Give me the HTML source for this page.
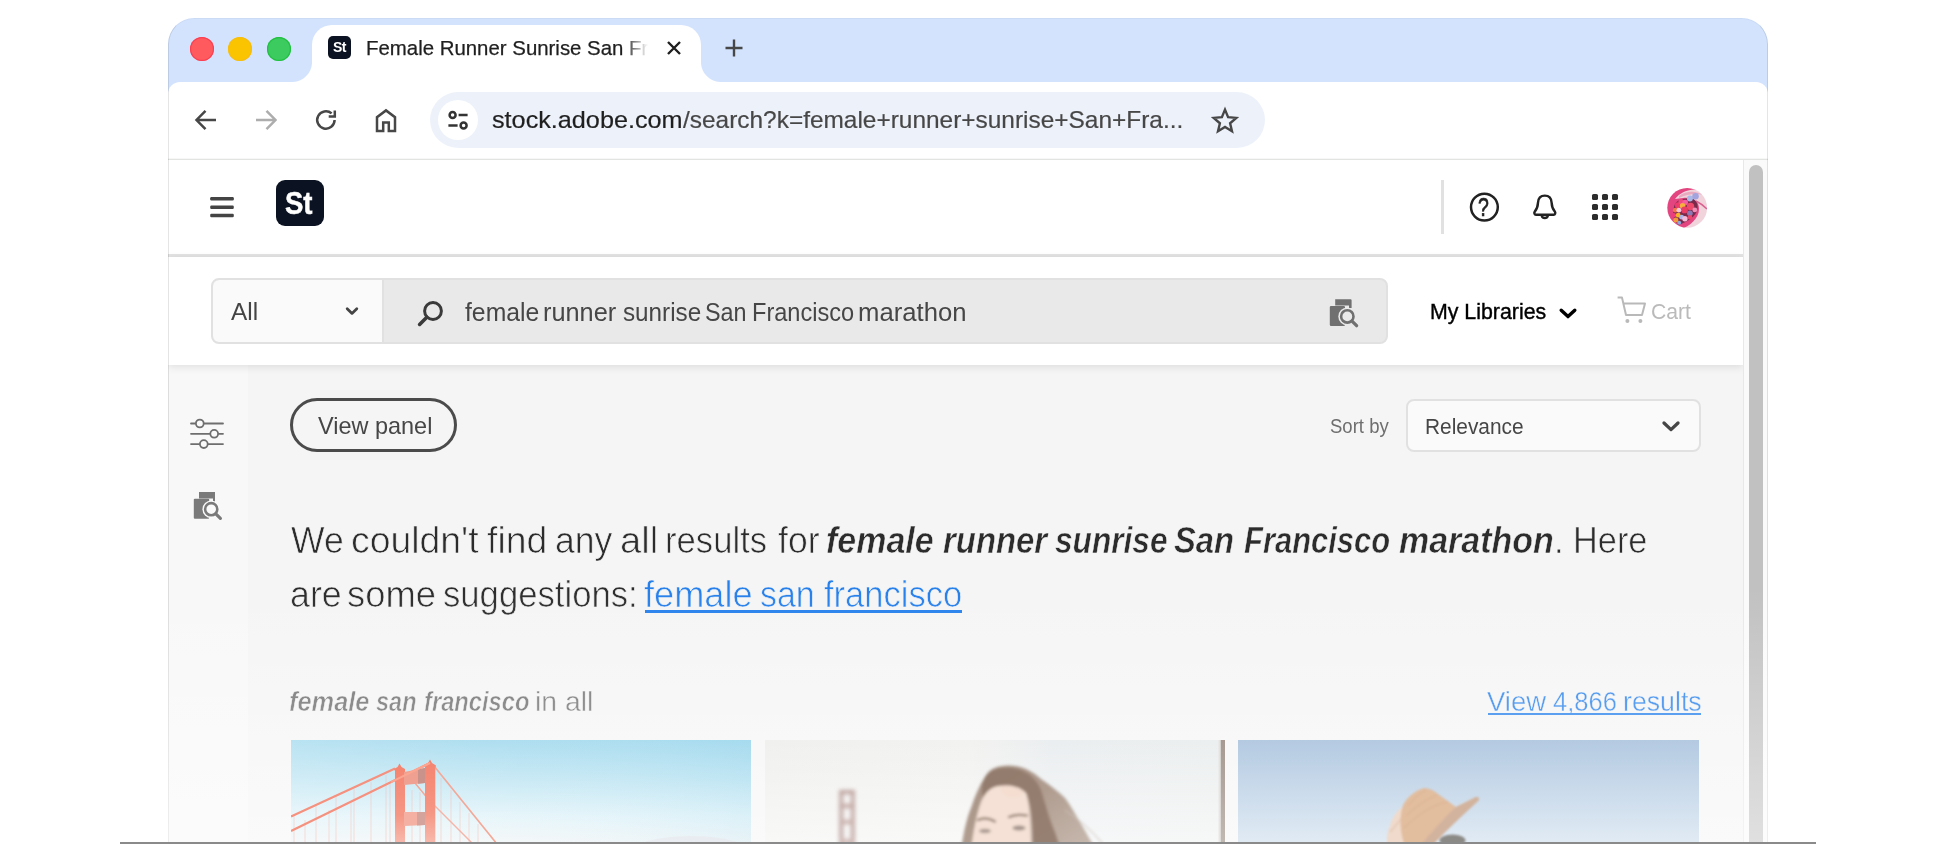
<!DOCTYPE html>
<html lang="en">
<head>
<meta charset="utf-8">
<title>Female Runner Sunrise San Francisco Marathon</title>
<style>
*{box-sizing:border-box;margin:0;padding:0}
html,body{width:1936px;height:844px;overflow:hidden;background:#fff}
body{font-family:"Liberation Sans",sans-serif;position:relative;color:#2c2c2c}
.abs{position:absolute}
#win{position:absolute;left:168px;top:18px;width:1600px;height:900px;border-radius:26px 26px 0 0;background:#fff;overflow:hidden}
#winb{position:absolute;left:0;top:0;width:1600px;height:900px;border-radius:26px 26px 0 0;border:1px solid rgba(0,0,0,.10);border-top-color:rgba(0,0,0,.03);pointer-events:none;z-index:39}
#tabstrip{position:absolute;left:0;top:0;width:1600px;height:90px;background:#d3e3fd}
#tab{position:absolute;left:144px;top:7px;width:389px;height:57px;background:#fff;border-radius:20px 20px 0 0}
#tab:before,#tab:after{content:"";position:absolute;bottom:0;width:20px;height:20px}
#tab:before{left:-20px;background:radial-gradient(circle at 0 0,rgba(255,255,255,0) 19.5px,#fff 20.5px)}
#tab:after{right:-20px;background:radial-gradient(circle at 100% 0,rgba(255,255,255,0) 19.5px,#fff 20.5px)}
.tl{position:absolute;top:19px;width:24px;height:24px;border-radius:50%}
#toolbar{position:absolute;left:0;top:64px;width:1600px;height:77px;background:#fff;border-radius:12px 12px 0 0}
#tbline{position:absolute;left:0;top:140px;width:1600px;height:3px;background:linear-gradient(#f7f7f7 0,#f7f7f7 33%,#e2e4e1 33%,#e2e4e1 67%,#f5f6f5 67%)}
#omni{position:absolute;left:262px;top:74px;width:835px;height:56px;border-radius:28px;background:#edf2fa}
#omni .chip{position:absolute;left:8px;top:8px;width:40px;height:40px;border-radius:50%;background:#fff}
#t_url b{font-weight:normal;color:#1f1f1f}
#tabclip{position:absolute;left:54px;top:0;width:284px;height:57px;overflow:hidden;-webkit-mask-image:linear-gradient(90deg,#000 0,#000 258px,transparent 282px);mask-image:linear-gradient(90deg,#000 0,#000 258px,transparent 282px)}
#page{position:absolute;left:0;top:142px;width:1575px;height:760px;background:#f5f5f5;overflow:hidden}
#sb{position:absolute;left:1575px;top:142px;width:25px;height:760px;background:#fafafa;border-left:1px solid #e8e8e8}
#sb i{position:absolute;left:5px;top:5px;width:13.5px;height:760px;border-radius:7px;background:#c1c1c1}
#hdr{position:absolute;left:0;top:0;width:1575px;height:94px;background:#fff}
#hdrline{position:absolute;left:0;top:94px;width:1575px;height:3px;background:#e3e3e3}
#srow{position:absolute;left:0;top:97px;width:1575px;height:108px;background:#fff;box-shadow:0 2px 8px rgba(0,0,0,.10)}
#side{position:absolute;left:0;top:205px;width:80px;height:600px;background:#f8f8f8}
.ac{font-family:"Liberation Sans",sans-serif}

#stlogo{left:108px;top:20px;width:48px;height:46px;border-radius:9px;background:#0b1221}
#avatar{left:1499px;top:27px}
#sbox{left:43px;top:21px;width:1177px;height:66px;border-radius:8px;background:#e9e9e9;border:2px solid #e1e1e1;overflow:hidden}
#sall{left:-2px;top:-2px;width:173px;height:66px;background:#fafafa;border:2px solid #e1e1e1;border-radius:8px 0 0 8px;font-size:22px;line-height:62px;color:#2c2c2c}
.t{position:absolute;display:block;white-space:nowrap;transform-origin:0 0;line-height:1.2}
#vp{left:122px;top:238px;width:167px;height:54px;border:3px solid #4b4b4b;border-radius:27px}
#sortsel{left:1238px;top:239px;width:295px;height:53px;border:2px solid #e1e1e1;border-radius:8px;background:#fafafa}
.hl{font-size:37px;color:#2c2c2c;-webkit-text-stroke:.7px #f5f5f5}
.bi{font-weight:bold;font-style:italic}
.hl.bi{-webkit-text-stroke:.55px #f5f5f5}
.lk{color:#2680eb}
.hl.lk{-webkit-text-stroke:.7px #f5f5f5}
.sb{font-size:28px;color:#6e6e6e;-webkit-text-stroke:.4px #f5f5f5}
.sb.bi{color:#6a6a6a;-webkit-text-stroke:.6px #f5f5f5}
.sb.lk{color:#2680eb}
#fade{display:none}
#gfade{position:absolute;left:0;top:570px;width:1600px;height:330px;background:linear-gradient(rgba(255,255,255,0) 0,rgba(255,255,255,.5) 256px,rgba(255,255,255,.5) 100%);pointer-events:none;z-index:40}
#img1,#img2,#img3{z-index:45}
</style>
</head>
<body>
<div id="win">
  <div id="tabstrip">
    <div class="tl" style="left:22px;background:#ff5b5f;box-shadow:inset 0 0 0 1.2px #fb3f52"></div>
    <div class="tl" style="left:60px;background:#fac400;box-shadow:inset 0 0 0 1.2px #f7bd10"></div>
    <div class="tl" style="left:99px;background:#3bcb5e;box-shadow:inset 0 0 0 1.2px #22c040"></div>
    <div id="tab">
      <div class="abs" style="left:16px;top:11px;width:23px;height:23px;border-radius:5px;background:#0b1221;color:#fff;font-weight:bold;font-size:14px;line-height:23px;transform:scaleX(1.0001);text-align:center;letter-spacing:-0.5px">St</div>
      <div id="tabclip"><span class="t" id="t_tab" style="-webkit-text-stroke:.25px #1f1f1f;left:0.00px;top:11.11px;font-size:20.5px;color:#1f1f1f;transform:scaleX(0.9952)">Female Runner Sunrise San Francisco Marathon</span></div>
      <svg class="abs" style="left:353px;top:14px" width="18" height="18" viewBox="0 0 18 18"><path d="M3 3 L15 15 M15 3 L3 15" stroke="#1f1f1f" stroke-width="2.4" fill="none"/></svg>
    </div>
    <svg class="abs" style="left:556px;top:20px" width="20" height="20" viewBox="0 0 20 20"><path d="M10 1.5 V18.5 M1.5 10 H18.5" stroke="#474747" stroke-width="2.4" fill="none"/></svg>
  </div>
  <div id="toolbar"></div>
  <svg class="abs" style="left:24px;top:88px" width="28" height="28" viewBox="0 0 28 28"><path d="M24 14 H5 M13.5 4.8 L4.5 14 L13.5 23.2" stroke="#474747" stroke-width="2.5" fill="none"/></svg>
  <svg class="abs" style="left:84px;top:88px" width="28" height="28" viewBox="0 0 28 28"><path d="M4 14 H23 M14.5 4.8 L23.5 14 L14.5 23.2" stroke="#adadad" stroke-width="2.5" fill="none"/></svg>
  <svg class="abs" style="left:144px;top:88px" width="28" height="28" viewBox="0 0 28 28"><path d="M22.6 14 A8.7 8.7 0 1 1 19.6 7.4" stroke="#474747" stroke-width="2.5" fill="none"/><path d="M22.8 4.5 V10.6 H16.7" stroke="#474747" stroke-width="2.5" fill="none"/></svg>
  <svg class="abs" style="left:204px;top:88px" width="28" height="28" viewBox="0 0 28 28"><path d="M5 25 V11.2 L14 4.4 L23 11.2 V25 H16.8 V16.4 H11.2 V25 Z" stroke="#474747" stroke-width="2.5" fill="none" stroke-linejoin="miter"/></svg>
  <div id="omni"><div class="chip"></div>
    <svg class="abs" style="left:16px;top:16px" width="24" height="24" viewBox="0 0 24 24"><circle cx="6.6" cy="7" r="3" stroke="#333" stroke-width="2.5" fill="none"/><path d="M12.6 7 H21.6" stroke="#333" stroke-width="2.5"/><circle cx="17.6" cy="17.4" r="3" stroke="#333" stroke-width="2.5" fill="none"/><path d="M2.4 17.4 H11.6" stroke="#333" stroke-width="2.5"/></svg>
    <span class="t" id="t_url1" style="left:61.60px;top:14.21px;font-size:24px;color:#1f1f1f;-webkit-text-stroke:.2px #1f1f1f;transform:scaleX(1.0503)">stock.adobe.com</span><span class="t" id="t_url2" style="left:252.60px;top:14.21px;font-size:24px;color:#474747;-webkit-text-stroke:.2px #474747;transform:scaleX(1.0176)">/search?k=female+runner+sunrise+San+Fra...</span>
    <svg class="abs" style="left:780px;top:14px" width="30" height="30" viewBox="0 0 30 30"><path d="M15 3.6 L18.1 11.2 L26.3 11.9 L20.1 17.3 L22 25.3 L15 21 L8 25.3 L9.9 17.3 L3.7 11.9 L11.9 11.2 Z" stroke="#474747" stroke-width="2.4" fill="none" stroke-linejoin="miter"/></svg>
  </div>
  <div id="tbline"></div>
  <div id="page">
    <div id="side"></div>
    <!-- results content -->
    <div id="content">
      <div class="abs" id="vp"></div><span class="t" id="t_vp" style="left:150.00px;top:252.21px;font-size:24px;color:#464646;transform:scaleX(0.9779)">View panel</span>
      <span class="t" id="t_sort" style="left:1161.80px;top:254.41px;font-size:20px;color:#6e6e6e;transform:scaleX(0.9265)">Sort by</span>
      <span class="t" id="t_rel" style="left:1257.00px;top:253.91px;font-size:22px;color:#464646;z-index:2;transform:scaleX(0.9486)">Relevance</span><div class="abs" id="sortsel">
        <svg class="abs" style="left:253px;top:19px" width="20" height="14" viewBox="0 0 20 14"><path d="M3 3 L10 9.6 L17 3" stroke="#464646" stroke-width="3.3" fill="none" stroke-linecap="round" stroke-linejoin="round"/></svg>
      </div>
      <span class="t hl" id="t_hA_0" style="left:122.50px;top:359.25px;transform:scaleX(0.9610)">We</span>
      <span class="t hl" id="t_hA_1" style="left:182.50px;top:359.25px;transform:scaleX(1.0095)">couldn't</span>
      <span class="t hl" id="t_hA_2" style="left:318.50px;top:359.25px;transform:scaleX(1.0100)">find</span>
      <span class="t hl" id="t_hA_3" style="left:386.50px;top:359.25px;transform:scaleX(0.9610)">any</span>
      <span class="t hl" id="t_hA_4" style="left:451.50px;top:359.25px;transform:scaleX(1.0309)">all</span>
      <span class="t hl" id="t_hA_5" style="left:496.50px;top:359.25px;transform:scaleX(0.9370)">results</span>
      <span class="t hl" id="t_hA_6" style="left:609.50px;top:359.25px;transform:scaleX(0.9610)">for</span>
      <span class="t hl bi" id="t_hB_0" style="left:658.00px;top:359.25px;transform:scaleX(0.9178)">female</span>
      <span class="t hl bi" id="t_hB_1" style="left:775.00px;top:359.25px;transform:scaleX(0.8890)">runner</span>
      <span class="t hl bi" id="t_hB_2" style="left:887.00px;top:359.25px;transform:scaleX(0.8550)">sunrise</span>
      <span class="t hl bi" id="t_hB_3" style="left:1006.00px;top:359.25px;transform:scaleX(0.8861)">San</span>
      <span class="t hl bi" id="t_hB_4" style="left:1076.00px;top:359.25px;transform:scaleX(0.8362)">Francisco</span>
      <span class="t hl bi" id="t_hB_5" style="left:1231.00px;top:359.25px;transform:scaleX(0.9177)">marathon</span>
      <span class="t hl" id="t_hC" style="left:1386.00px;top:359.25px;transform:scaleX(0.9272)">. Here</span>
      <span class="t hl" id="t_hD_0" style="left:121.50px;top:413.00px;transform:scaleX(0.9665)">are</span>
      <span class="t hl" id="t_hD_1" style="left:178.50px;top:413.00px;transform:scaleX(0.9821)">some</span>
      <span class="t hl" id="t_hD_2" style="left:274.50px;top:413.00px;transform:scaleX(0.9372)">suggestions:</span>
      <span class="t hl lk" id="t_hE_0" style="left:476.00px;top:413.00px;transform:scaleX(0.9788)">female</span>
      <span class="t hl lk" id="t_hE_1" style="left:591.80px;top:413.00px;transform:scaleX(0.9178)">san</span>
      <span class="t hl lk" id="t_hE_2" style="left:655.80px;top:413.00px;transform:scaleX(0.9339)">francisco</span>
      <div class="abs" id="u_hE" style="left:476.5px;top:450px;width:317px;height:2.6px;background:#2680eb"></div>
      <span class="t sb bi" id="t_sA_0" style="left:121.00px;top:525.30px;transform:scaleX(0.9070)">female</span>
      <span class="t sb bi" id="t_sA_1" style="left:208.00px;top:525.30px;transform:scaleX(0.8391)">san</span>
      <span class="t sb bi" id="t_sA_2" style="left:255.60px;top:525.30px;transform:scaleX(0.8475)">francisco</span>
      <span class="t sb" id="t_sB" style="left:367.00px;top:525.30px;transform:scaleX(1.0118)">in all</span>
      <span class="t sb lk" id="t_vr_0" style="left:1318.80px;top:525.30px;transform:scaleX(0.9814)">View</span>
      <span class="t sb lk" id="t_vr_1" style="left:1385.00px;top:525.30px;transform:scaleX(0.9124)">4,866</span>
      <span class="t sb lk" id="t_vr_2" style="left:1454.80px;top:525.30px;transform:scaleX(0.9540)">results</span>
      <div class="abs" id="u_vr" style="left:1320px;top:553px;width:213px;height:2.4px;background:#2680eb"></div>
      
    </div>
    <div id="fade"></div>
    <svg class="abs" style="left:20px;top:256px" width="38" height="36" viewBox="0 0 38 36">
      <g stroke="#6e6e6e" stroke-width="1.8" fill="none" stroke-linecap="round">
        <path d="M3 7.5 H7.2 M16.4 7.5 H35"/><circle cx="11.8" cy="7.5" r="3.9" fill="#fafafa"/>
        <path d="M3 17.8 H21.6 M30.8 17.8 H35"/><circle cx="26.2" cy="17.8" r="3.9" fill="#fafafa"/>
        <path d="M3 28.1 H11.2 M20.4 28.1 H35"/><circle cx="15.8" cy="28.1" r="3.9" fill="#fafafa"/>
      </g>
    </svg>
    <svg class="abs" style="left:24px;top:330px" width="32" height="32" viewBox="0 0 32 32">
      <path d="M7 2 H23 V12 H21 V8.5 H7 Z" fill="#7a7a7a"/>
      <rect x="1.8" y="8.8" width="15.4" height="20" rx="1" fill="#7a7a7a"/>
      <circle cx="19.2" cy="19.2" r="8.8" fill="#fafafa"/>
      <circle cx="19.2" cy="19.2" r="6.1" fill="#fafafa" stroke="#7a7a7a" stroke-width="2.6"/>
      <path d="M23.8 23.8 L28.4 28.4" stroke="#7a7a7a" stroke-width="3.2" stroke-linecap="round"/>
    </svg>
    <svg class="abs" id="img1" style="left:123px;top:580px" width="460" height="110" viewBox="0 0 460 110">
      <defs>
        <linearGradient id="g1" x1="0" y1="0" x2="0" y2="1"><stop offset="0" stop-color="#a9dcef"/><stop offset=".35" stop-color="#c6e8f4"/><stop offset=".7" stop-color="#e6f5fa"/><stop offset="1" stop-color="#f7f8f8"/></linearGradient>
        <linearGradient id="g1h" x1="0" y1="0" x2="1" y2="0"><stop offset="0" stop-color="#fff" stop-opacity=".18"/><stop offset=".5" stop-color="#fff" stop-opacity=".05"/><stop offset="1" stop-color="#8fd0ea" stop-opacity=".12"/></linearGradient>
        <linearGradient id="g1t" x1="0" y1="0" x2="0" y2="1"><stop offset="0" stop-color="#f4836f"/><stop offset=".6" stop-color="#f59785"/><stop offset="1" stop-color="#f8c2b7"/></linearGradient>
        <filter id="b1" x="-5%" y="-5%" width="110%" height="110%"><feGaussianBlur stdDeviation=".7"/></filter>
      </defs>
      <rect width="460" height="110" fill="url(#g1)"/>
      <rect width="460" height="110" fill="url(#g1h)"/>
      <g filter="url(#b1)">
        <g stroke="#f3b8ae" stroke-width=".9" opacity=".5" fill="none">
          <path d="M3 76 V110 M14 80 V110 M25 66 V110 M38 70 V110 M45 57 V110 M60 62 V110 M63 49 V110 M80 42 V110 M95 35 V110 M99 44 V110 M121 50 V110 M129 52 V110 M150 38 V110 M160 50 V110 M169 62 V110 M178 73 V110 M187 84 V110"/>
        </g>
        <path d="M0 76.5 L104 28.6" stroke="#f5917e" stroke-width="2.2" fill="none"/>
        <path d="M0 91 L139 23" stroke="#f5917e" stroke-width="2.2" fill="none"/>
        <path d="M143 26 L206 104" stroke="#f4a898" stroke-width="1.7" fill="none"/>
        <path d="M124 43 L138 60" stroke="#f4a898" stroke-width="1.5" fill="none"/>
        <path d="M142 64 L182 104" stroke="#f5b5a8" stroke-width="1.5" fill="none"/>
        <path d="M104 110 V31 L103 29 L106.5 27 L108.5 23.5 L110.5 27 L114 29 V110 Z" fill="url(#g1t)"/>
        <path d="M134 110 V27 L133 25 L137 23 L139 19.5 L141 23 L145 25.5 L144.3 28 V110 Z" fill="url(#g1t)"/>
        <path d="M113 32 L134 28 V43 L113 45 Z" fill="#f0a090"/>
        <path d="M127 29.5 L134 28 V43 L127 43.7 Z" fill="#c9928a"/>
        <path d="M113 72 H134 V85 L113 86 Z" fill="#f3b0a3"/>
        <path d="M126 72 H134 V85 L126 85.5 Z" fill="#d4a39c"/>
        <path d="M100 42.2 L139 23" stroke="#fba692" stroke-width="2" fill="none"/>
      </g>
      <ellipse cx="400" cy="112" rx="60" ry="16" fill="#e9e9ee" opacity=".6" filter="url(#b1)"/>
    </svg>
    <svg class="abs" id="img2" style="left:597px;top:580px" width="460" height="110" viewBox="0 0 460 110">
      <defs>
        <linearGradient id="g2" x1="0" y1="0" x2="1" y2="0"><stop offset="0" stop-color="#f0f0ee"/><stop offset=".45" stop-color="#f2f2f0"/><stop offset=".62" stop-color="#ebeef0"/><stop offset="1" stop-color="#ecefef"/></linearGradient>
        <linearGradient id="g2v" x1="0" y1="0" x2="0" y2="1"><stop offset="0" stop-color="#fff" stop-opacity="0"/><stop offset="1" stop-color="#fff" stop-opacity=".6"/></linearGradient>
        <linearGradient id="g2hair" x1="0" y1="0" x2="1" y2="1"><stop offset="0" stop-color="#a38e80"/><stop offset=".45" stop-color="#b09c8f"/><stop offset="1" stop-color="#c9bbb1"/></linearGradient>
        <linearGradient id="g2e" x1="0" y1="0" x2="0" y2="1"><stop offset="0" stop-color="#a69a92"/><stop offset="1" stop-color="#c3bbb5"/></linearGradient>
        <filter id="b2" x="-40%" y="-20%" width="180%" height="140%"><feGaussianBlur stdDeviation="2.2"/></filter>
        <filter id="b2b" x="-20%" y="-20%" width="140%" height="140%"><feGaussianBlur stdDeviation="1.5"/></filter>
      </defs>
      <rect width="460" height="110" fill="url(#g2)"/>
      <rect width="460" height="110" fill="url(#g2v)"/>
      <g filter="url(#b2)">
        <rect x="74" y="50" width="4.5" height="60" fill="#c8b2ae"/>
        <rect x="85.5" y="50" width="4.5" height="60" fill="#c8b2ae"/>
        <rect x="74" y="50" width="16" height="4" fill="#bfa5a1"/>
        <rect x="74" y="64" width="16" height="4" fill="#c4aaa6"/>
        <rect x="74" y="80" width="16" height="4" fill="#c9b0ac"/>
        <rect x="74" y="99" width="16" height="5" fill="#d0bab6"/>
      </g>
      <g filter="url(#b2b)">
        <path d="M196 110 C198 96 201 80 206 68 C210 56 214 46 220 37 C224 29 232 25.5 244 25.5 C258 25.5 268 32 276 39 C286 46 294 52 300 58 C306 66 310 74 316 84 C322 94 326 102 332 110 Z" fill="url(#g2hair)"/>
        <path d="M220 37 C226 28 240 26 252 29 C264 32 272 40 276 50 C280 62 284 78 290 92 L296 110 L268 110 C268 92 268 70 262 54 C254 46 244 44 232 46 C226 48 222 52 218 58 C216 50 217 43 220 37 Z" fill="#8f7868" opacity=".85"/>
        <path d="M206 110 C208 94 211 76 216 62 C220 52 226 47 234 46 C244 44.5 254 46 261 53 C265 66 266 84 266 110 Z" fill="#f5e1d5"/>
        <path d="M236 47 C244 46 252 48 258 52 C256 56 250 58 242 56 C238 54 236 50 236 47 Z" fill="#f6d9ca" opacity=".45"/>
        <path d="M213 80 C218 77.5 224 78 230 81.5" stroke="#8f776a" stroke-width="2.2" fill="none" stroke-linecap="round"/>
        <path d="M244 77 C250 74.5 256 74.5 262 75.5" stroke="#8f776a" stroke-width="2.2" fill="none" stroke-linecap="round"/>
        <ellipse cx="220" cy="91" rx="6" ry="2.2" fill="#aa9a92"/>
        <ellipse cx="254" cy="88" rx="6.5" ry="2.4" fill="#a3938b"/>
        <path d="M300 70 C312 78 326 90 338 104" stroke="#cfc3bb" stroke-width="1.2" fill="none" opacity=".7"/>
      </g>
      <rect x="455.6" y="0" width="4.4" height="110" fill="url(#g2e)"/>
      <rect x="453.6" y="0" width="2" height="110" fill="#ddd8d4" opacity=".55"/>
    </svg>
    <svg class="abs" id="img3" style="left:1070px;top:580px" width="461" height="110" viewBox="0 0 461 110">
      <defs>
        <linearGradient id="g3" x1="0" y1="0" x2="0" y2="1"><stop offset="0" stop-color="#b4cae1"/><stop offset=".5" stop-color="#ccdcec"/><stop offset="1" stop-color="#e4edf5"/></linearGradient>
        <filter id="b3" x="-10%" y="-10%" width="120%" height="120%"><feGaussianBlur stdDeviation=".8"/></filter>
      </defs>
      <rect width="461" height="110" fill="url(#g3)"/>
      <g filter="url(#b3)">
        <ellipse cx="214.5" cy="100.5" rx="13" ry="6" fill="#8c8a86"/>
        <path d="M150 110 C148 100 149 92 152 86 C154 78 158 72 164 67 L170 72 C168 82 168 96 170 110 Z" fill="#f0dacb"/>
        <path d="M152 92 C156 88 160 82 166 76" stroke="#e3c7b6" stroke-width="1.4" fill="none"/>
        <path d="M186 48 C190 48 196 50 200 54 L218 67 L238 57 C241 56.5 242 59 240 61 C226 74 208 90 194 106 L167 106 C162 92 161 78 165 65 C170 56 178 50 186 48 Z" fill="#e2bd9e"/>
        <path d="M218 67 L238 57 C241 56.5 242 59 240 61 C226 74 208 90 194 106 L182 106 C194 92 206 78 218 67 Z" fill="#d2b39e"/>
        <path d="M170 66 C176 58 182 53 188 50 M168 76 C178 66 190 58 200 55 M166 88 C180 74 196 64 210 62" stroke="#d8ae8c" stroke-width="1" fill="none" opacity=".6"/>
      </g>
    </svg>
    <div id="hdr">
      <svg class="abs" style="left:40px;top:34px" width="28" height="26" viewBox="0 0 28 26" fill="#444"><rect x="2.2" y="3" width="23.6" height="3.5" rx="1.2"/><rect x="2.2" y="11.5" width="23.6" height="3.5" rx="1.2"/><rect x="2.2" y="19.8" width="23.6" height="3.5" rx="1.2"/></svg>
      <div class="abs" id="stlogo"></div><span class="t" id="t_st" style="left:117.20px;top:24.91px;font-size:31px;font-weight:bold;color:#fff;-webkit-text-stroke:.5px #fff;transform:scaleX(0.8882)">St</span>
      <div class="abs" style="left:1273px;top:20px;width:3px;height:54px;background:#e1e1e1"></div>
      <span class="t" id="t_q" style="left:1310.40px;top:32.00px;font-size:25px;color:#222;-webkit-text-stroke:.7px #222;transform:scaleX(0.7781)">?</span><svg class="abs" style="left:1299px;top:30px" width="34" height="34" viewBox="0 0 34 34"><circle cx="17.4" cy="17.1" r="13.4" stroke="#222" stroke-width="2.5" fill="none"/></svg>
      <svg class="abs" style="left:1360px;top:30px" width="34" height="34" viewBox="0 0 34 34"><path d="M16.8 5.6 C12.2 5.6 10.2 8.8 10 12.6 C9.8 17 9 19 6.8 21.6 C5.8 22.8 6.4 24.7 8 24.7 H25.6 C27.2 24.7 27.8 22.8 26.8 21.6 C24.6 19 23.8 17 23.6 12.6 C23.4 8.8 21.4 5.6 16.8 5.6 Z" stroke="#222" stroke-width="2.4" fill="none" stroke-linejoin="round"/><path d="M13.7 25.6 A3.2 3.2 0 0 0 19.9 25.6" stroke="#222" stroke-width="2.3" fill="none"/></svg>
      <svg class="abs" style="left:1423px;top:33px" width="28" height="28" viewBox="0 0 28 28" fill="#2c2c2c"><rect x="1" y="1" width="6" height="6" rx="1.6"/><rect x="11" y="1" width="6" height="6" rx="1.6"/><rect x="21" y="1" width="6" height="6" rx="1.6"/><rect x="1" y="11" width="6" height="6" rx="1.6"/><rect x="11" y="11" width="6" height="6" rx="1.6"/><rect x="21" y="11" width="6" height="6" rx="1.6"/><rect x="1" y="21" width="6" height="6" rx="1.6"/><rect x="11" y="21" width="6" height="6" rx="1.6"/><rect x="21" y="21" width="6" height="6" rx="1.6"/></svg>
      <svg class="abs" id="avatar" width="41" height="41" viewBox="0 0 41 41">
        <defs><clipPath id="avc"><circle cx="20.2" cy="20.8" r="19.9"/></clipPath>
        <filter id="avb" x="-10%" y="-10%" width="120%" height="120%"><feGaussianBlur stdDeviation=".55"/></filter></defs>
        <g clip-path="url(#avc)"><g filter="url(#avb)">
          <rect x="-2" y="-2" width="45" height="45" fill="#e2457f"/>
          <path d="M8 12 C14 4 26 0 36 4 L44 14 V44 H10 C22 40 32 32 32 22 C32 14 26 10 16 11 Z" fill="#f1d3dc"/>
          <path d="M12 9 C20 3 30 4 36 8 C30 6 20 7 12 11 Z" fill="#e9a9bf"/>
          <path d="M29 14 C33 16 37 19 40 22" stroke="#d9628f" stroke-width="1.5" fill="none"/>
          <path d="M7 20 C8 13 16 10 26 12 C30 14 31 18 30.5 22 C29 30 20 35 10.5 38.5 C6 34 5.5 26 7 20 Z" fill="#7a2c4c"/>
          <path d="M1 24 C2 32 5 37 10 39.5 L11 37 C6 33 5 27 6 21 Z" fill="#e2457f"/>
          <circle cx="10.9" cy="18.2" r="3" fill="#ee3a6e"/><circle cx="14.2" cy="14.9" r="2.8" fill="#f04a7e"/><circle cx="18.2" cy="15.6" r="2.8" fill="#f45ca0"/><circle cx="8.3" cy="23.2" r="2.4" fill="#f4774a"/><circle cx="6.9" cy="28.2" r="2.3" fill="#f03c80"/><circle cx="15.6" cy="18.9" r="2.8" fill="#f6b03c"/><circle cx="23.5" cy="19.5" r="3.7" fill="#ee4a6a"/><circle cx="17.5" cy="22.9" r="3.4" fill="#ea3e64"/><circle cx="11.9" cy="23.2" r="2.4" fill="#f8c6dc"/><circle cx="27.8" cy="22.9" r="2.4" fill="#f090b8"/><circle cx="22.9" cy="26.2" r="2.8" fill="#8c7ab4"/><circle cx="11.2" cy="28.2" r="2.4" fill="#f6b428"/><circle cx="22.9" cy="30.2" r="2.3" fill="#e8486a"/><circle cx="14.6" cy="30.2" r="2.4" fill="#a9b6e8"/><circle cx="17.9" cy="31.8" r="2.7" fill="#f4bcd8"/><circle cx="8.9" cy="33.1" r="2.5" fill="#f49a3a"/><circle cx="12.2" cy="35.8" r="2" fill="#8ea6dc"/><circle cx="22.9" cy="11.6" r="3" fill="#a9b8e6"/><circle cx="28.5" cy="9.3" r="3.3" fill="#a3a4de"/>
        </g></g>
      </svg>
    </div>
    <div id="hdrline"></div>
    <div id="srow">
      <div class="abs" id="sbox">
        <div class="abs" id="sall"><span class="t" id="t_all" style="left:17.80px;top:18.71px;font-size:23px;color:#444;transform:scaleX(1.0599)">All</span>
          <svg class="abs" style="left:131px;top:26px" width="16" height="12" viewBox="0 0 16 12"><path d="M3.2 2.8 L8 7.4 L12.8 2.8" stroke="#444" stroke-width="2.8" fill="none" stroke-linecap="round" stroke-linejoin="round"/></svg>
        </div>
        <svg class="abs" style="left:202px;top:18.5px" width="30" height="30" viewBox="0 0 30 30"><circle cx="18" cy="12" r="8.4" stroke="#3a3a3a" stroke-width="3" fill="none"/><path d="M11.8 18.2 L4.6 25.4" stroke="#3a3a3a" stroke-width="3.6" stroke-linecap="round"/></svg>
        <svg class="abs" style="left:1114px;top:15.5px" width="34" height="34" viewBox="0 0 34 34">
          <path d="M8.2 3.2 H23.6 Q24.6 3.2 24.6 4.2 V12 H22 V9.6 H8.2 Z" fill="#707070"/>
          <rect x="2.8" y="9.9" width="15.2" height="20" rx="1.2" fill="#707070"/>
          <circle cx="20.3" cy="20.4" r="9" fill="#e9e9e9"/>
          <circle cx="20.3" cy="20.4" r="6.2" fill="#e9e9e9" stroke="#707070" stroke-width="2.6"/>
          <path d="M25 25.1 L29.6 29.7" stroke="#707070" stroke-width="3.3" stroke-linecap="round"/>
        </svg>
        <span class="t" id="t_sq_0" style="left:251.60px;top:17.00px;font-size:26px;color:#464646;transform:scaleX(0.9512)">female</span>
      <span class="t" id="t_sq_1" style="left:330.40px;top:17.00px;font-size:26px;color:#464646;transform:scaleX(0.9739)">runner</span>
      <span class="t" id="t_sq_2" style="left:409.80px;top:17.00px;font-size:26px;color:#464646;transform:scaleX(0.9324)">sunrise</span>
      <span class="t" id="t_sq_3" style="left:492.40px;top:17.00px;font-size:26px;color:#464646;transform:scaleX(0.8987)">San</span>
      <span class="t" id="t_sq_4" style="left:539.00px;top:17.00px;font-size:26px;color:#464646;transform:scaleX(0.9069)">Francisco</span>
      <span class="t" id="t_sq_5" style="left:645.40px;top:17.00px;font-size:26px;color:#464646;transform:scaleX(0.9876)">marathon</span>
      </div>
      <span class="t" id="t_ml" style="left:1262.40px;top:42.21px;font-size:22px;color:#000;-webkit-text-stroke:0.4px #000;transform:scaleX(0.9696)">My Libraries</span>
      <svg class="abs" style="left:1389.5px;top:50px" width="20" height="14" viewBox="0 0 20 14"><path d="M3.2 3.2 L10 9.6 L16.8 3.2" stroke="#000" stroke-width="3.4" fill="none" stroke-linecap="round" stroke-linejoin="round"/></svg>
      <svg class="abs" style="left:1448px;top:38px" width="32" height="32" viewBox="0 0 32 32"><path d="M1.6 2.6 H6 L10 20 H26 L29 8.4 H8" stroke="#b9b9b9" stroke-width="2" fill="none" stroke-linejoin="round"/><circle cx="11.4" cy="26" r="2" fill="#b9b9b9"/><circle cx="24.4" cy="26" r="2" fill="#b9b9b9"/></svg>
      <span class="t" id="t_cart" style="left:1483.00px;top:42.21px;font-size:22px;color:#bababa;transform:scaleX(0.9622)">Cart</span>
    </div>
  </div>
  <div id="sb"><i></i></div>
  <div id="winb"></div>
  <div id="gfade"></div>
</div>
<div class="abs" style="left:120px;top:842px;width:1696px;height:2px;background:#8a8a8a;z-index:60"></div>
</body>
</html>
